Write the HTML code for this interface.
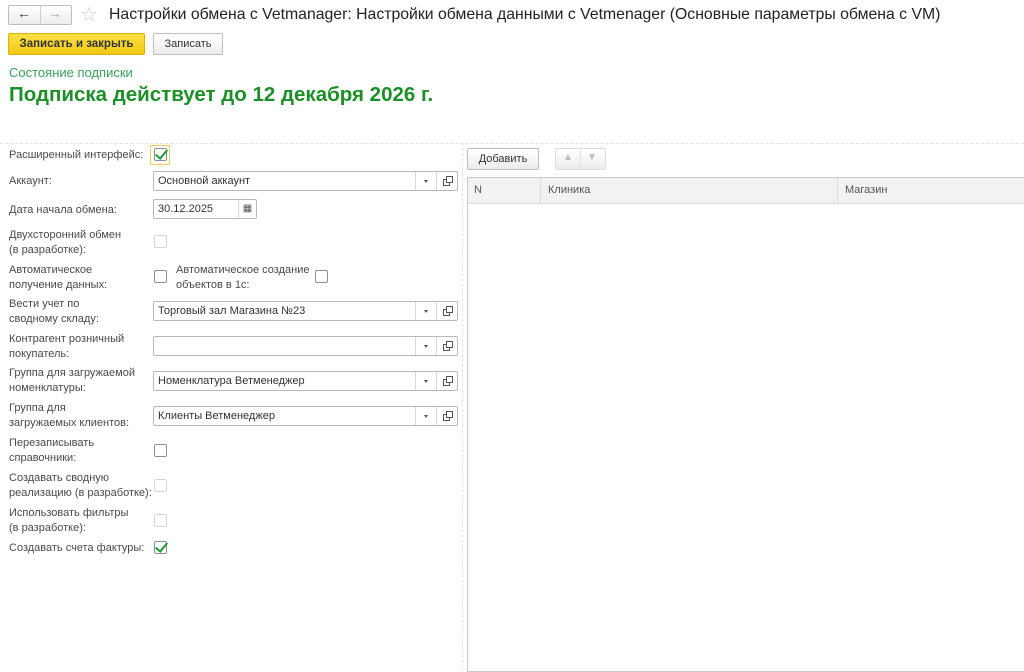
<!DOCTYPE html>
<html><head><meta charset="utf-8"><style>
*{box-sizing:border-box;margin:0;padding:0}
body{width:1024px;height:668px;overflow:hidden;background:#fff;font-family:"Liberation Sans",Arial,sans-serif;color:#333;position:relative}
.a{position:absolute}
.lbl{position:absolute;left:9px;font-size:11px;line-height:14.5px;color:#4a4a4a}
.fld{position:absolute;left:153px;width:305px;height:20px;border:1px solid #b9b9b9;border-radius:2px;font-size:11px;line-height:18px;padding-left:4px;color:#333;background:#fff}
.fld .dd{position:absolute;right:21px;top:0;width:21px;height:18px;border-left:1px solid #d8d8d8}
.fld .dd:after{content:"";position:absolute;left:8px;top:8px;border:2px solid transparent;border-top:3px solid #555}
.fld .op{position:absolute;right:0;top:0;width:21px;height:18px;border-left:1px solid #d8d8d8}
.op:before{content:"";position:absolute;left:6px;top:7px;width:5px;height:5px;border:1px solid #555}
.op:after{content:"";position:absolute;left:9px;top:4px;width:5px;height:5px;border:1px solid #555;background:#fff}
.cb{position:absolute;left:154px;width:13px;height:13px;border:1px solid #8f8f8f;border-radius:2px;background:#fff}
.cb.dis{border-color:#d6d6d6}
.chk:after{content:"";position:absolute;left:3px;top:-2px;width:5px;height:10px;border:solid #1f9a3a;border-width:0 2px 2px 0;transform:rotate(40deg)}
.btn{position:absolute;height:22px;border:1px solid #bdbdbd;border-radius:2px;background:linear-gradient(#fff,#ececec);font-size:11px;line-height:20px;text-align:center;color:#333}
</style></head><body>
<div class="btn" style="left:8px;top:5px;width:64px;height:20px"></div>
<div class="a" style="left:40px;top:6px;width:1px;height:18px;background:#d0d0d0"></div>
<div class="a" style="left:17px;top:5px;font-size:14px;color:#333;font-weight:bold">&#8592;</div>
<div class="a" style="left:48px;top:5px;font-size:14px;color:#aaa;font-weight:bold">&#8594;</div>
<div class="a" style="left:80px;top:2px;font-size:20px;color:#c8c8c8">&#9734;</div>
<div class="a" style="left:109px;top:6px;font-size:15.8px;color:#222">Настройки обмена с Vetmanager: Настройки обмена данными с Vetmenager (Основные параметры обмена с VM)</div>
<div class="btn" style="left:8px;top:33px;width:137px;background:linear-gradient(#f9e04a,#f2c811);border-color:#d8b200;color:#333;font-weight:bold;font-size:11.5px">Записать и закрыть</div>
<div class="btn" style="left:153px;top:33px;width:70px">Записать</div>
<div class="a" style="left:9px;top:65px;font-size:13px;color:#3aa05a">Состояние подписки</div>
<div class="a" style="left:9px;top:83px;font-size:20.5px;font-weight:bold;color:#1e8e28">Подписка действует до 12 декабря 2026 г.</div>
<div class="a" style="left:0;top:143px;width:1024px;border-top:1px dashed #e2e2e2"></div>
<div class="a" style="left:462px;top:143px;height:525px;border-left:1px dashed #e2e2e2"></div>

<div class="lbl" style="top:148px">Расширенный интерфейс:</div>
<div class="a" style="left:150px;top:145px;width:20px;height:20px;border:1px solid #f0d060"></div>
<div class="cb chk" style="top:148px;left:154px"></div>
<div class="lbl" style="top:174px">Аккаунт:</div>
<div class="fld" style="top:171px">Основной аккаунт<span class="dd"></span><span class="op"></span></div>
<div class="lbl" style="top:203px">Дата начала обмена:</div>
<div class="fld" style="top:199px;width:104px">30.12.2025<span class="a" style="right:0;top:0;width:18px;height:18px;border-left:1px solid #d8d8d8;font-size:10px;text-align:center;color:#555">▦</span></div>
<div class="lbl" style="top:228px">Двухсторонний обмен<br>(в разработке):</div>
<div class="cb dis" style="top:235px"></div>
<div class="lbl" style="top:263px">Автоматическое<br>получение данных:</div>
<div class="cb" style="top:270px"></div>
<div class="lbl" style="top:263px;left:176px">Автоматическое создание<br>объектов в 1с:</div>
<div class="cb" style="top:270px;left:315px"></div>
<div class="lbl" style="top:297px">Вести учет по<br>сводному складу:</div>
<div class="fld" style="top:301px">Торговый зал Магазина №23<span class="dd"></span><span class="op"></span></div>
<div class="lbl" style="top:332px">Контрагент розничный<br>покупатель:</div>
<div class="fld" style="top:336px"><span class="dd"></span><span class="op"></span></div>
<div class="lbl" style="top:366px">Группа для загружаемой<br>номенклатуры:</div>
<div class="fld" style="top:371px">Номенклатура Ветменеджер<span class="dd"></span><span class="op"></span></div>
<div class="lbl" style="top:401px">Группа для<br>загружаемых клиентов:</div>
<div class="fld" style="top:406px">Клиенты Ветменеджер<span class="dd"></span><span class="op"></span></div>
<div class="lbl" style="top:436px">Перезаписывать<br>справочники:</div>
<div class="cb" style="top:444px"></div>
<div class="lbl" style="top:471px">Создавать сводную<br>реализацию (в разработке):</div>
<div class="cb dis" style="top:479px"></div>
<div class="lbl" style="top:506px">Использовать фильтры<br>(в разработке):</div>
<div class="cb dis" style="top:514px"></div>
<div class="lbl" style="top:541px">Создавать счета фактуры:</div>
<div class="cb chk" style="top:541px"></div>

<div class="btn" style="left:467px;top:148px;width:72px">Добавить</div>
<div class="btn" style="left:555px;top:148px;width:51px;border-color:#ddd"></div>
<div class="a" style="left:580px;top:150px;width:1px;height:18px;background:#e2e2e2"></div>
<div class="a" style="left:563px;top:152px;font-size:10px;color:#bbb">&#9650;</div>
<div class="a" style="left:587px;top:152px;font-size:10px;color:#bbb">&#9660;</div>
<div class="a" style="left:467px;top:177px;width:560px;height:495px;border:1px solid #c8c8c8;border-right:none"></div>
<div class="a" style="left:468px;top:178px;width:556px;height:26px;background:#f2f2f2;border-bottom:1px solid #dcdcdc;font-size:11px;color:#555;line-height:25px">
<span class="a" style="left:6px">N</span>
<span class="a" style="left:72px;top:0;height:26px;border-left:1px solid #dcdcdc"></span>
<span class="a" style="left:80px">Клиника</span>
<span class="a" style="left:369px;top:0;height:26px;border-left:1px solid #dcdcdc"></span>
<span class="a" style="left:377px">Магазин</span>
</div>
</body></html>
